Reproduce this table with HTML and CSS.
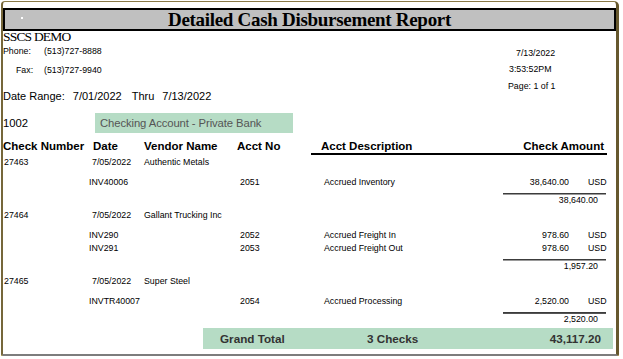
FILE: index.html
```html
<!DOCTYPE html>
<html>
<head>
<meta charset="utf-8">
<link rel="stylesheet" href="styles.css">
</head>
<body>
<div class="frame">
  <div class="titlebar"><span class="dot"></span><h1 class="title">Detailed Cash Disbursement Report</h1></div>
  <div class="head">
    <div class="left">
      <div class="name">SSCS DEMO</div>
      <div class="contact phone"><span class="lbl">Phone:</span><span>(513)727-8888</span></div>
      <div class="contact fax"><span class="lbl">Fax:</span><span>(513)727-9940</span></div>
      <div class="range"><span>Date Range:</span><span class="r1">7/01/2022</span><span class="r2">Thru</span><span class="r3">7/13/2022</span></div>
    </div>
    <div class="meta">
      <div class="m1">7/13/2022</div>
      <div class="m2">3:53:52PM</div>
      <div class="m3">Page: 1 of 1</div>
    </div>
  </div>
  <div class="account"><span class="acctno">1002</span><span class="acctname">Checking Account - Private Bank</span></div>

  <div class="grid hdr">
    <div>Check Number</div>
    <div class="p4">Date</div>
    <div>Vendor Name</div>
    <div class="p1">Acct No</div>
    <div class="uline p10">Acct Description</div>
    <div class="uline span2 right pr3">Check Amount</div>
  </div>

  <div class="group">
    <div class="grid check"><div class="p1">27463</div><div class="p3">7/05/2022</div><div class="span3">Authentic Metals</div></div>
    <div class="details">
      <div class="grid detail"><div></div><div class="span2">INV40006</div><div class="p4">2051</div><div class="p13">Accrued Inventory</div><div class="amt">38,640.00</div><div class="cur">USD</div></div>
    </div>
    <div class="subline"></div>
    <div class="subtotal">38,640.00</div>
  </div>

  <div class="group">
    <div class="grid check"><div class="p1">27464</div><div class="p3">7/05/2022</div><div class="span3">Gallant Trucking Inc</div></div>
    <div class="details">
      <div class="grid detail"><div></div><div class="span2">INV290</div><div class="p4">2052</div><div class="p13">Accrued Freight In</div><div class="amt">978.60</div><div class="cur">USD</div></div>
      <div class="grid detail"><div></div><div class="span2">INV291</div><div class="p4">2053</div><div class="p13">Accrued Freight Out</div><div class="amt">978.60</div><div class="cur">USD</div></div>
    </div>
    <div class="subline"></div>
    <div class="subtotal">1,957.20</div>
  </div>

  <div class="group">
    <div class="grid check"><div class="p1">27465</div><div class="p3">7/05/2022</div><div class="span3">Super Steel</div></div>
    <div class="details">
      <div class="grid detail"><div></div><div class="span2">INVTR40007</div><div class="p4">2054</div><div class="p13">Accrued Processing</div><div class="amt">2,520.00</div><div class="cur">USD</div></div>
    </div>
    <div class="subline dark"></div>
    <div class="subtotal">2,520.00</div>
  </div>

  <div class="grand"><div class="g1">Grand Total</div><div>3 Checks</div><div class="gamt">43,117.20</div></div>
</div>
</body>
</html>
```

FILE: styles.css
```css
html, body { margin: 0; padding: 0; background: #fff; }
body { font-family: "Liberation Sans", Arial, sans-serif; color: #000; }

.frame {
  margin: 1px 0 0 1px;
  width: 618px;
  height: 355px;
  box-sizing: border-box;
  border-left: 2px solid #76673a;
  border-top: 1px solid #8a7a48;
  border-right: 3px solid #66582e;
  border-bottom: 2px solid #7d7d7d;
  border-radius: 4px 5px 2px 2px;
  box-shadow: 0 1px 0 #f2d748;
  background: #fff;
}

.titlebar {
  position: relative;
  margin-top: 6px;
  height: 23px;
  box-sizing: border-box;
  border: 2px solid #000;
  background: #c0c0c0;
  display: flex;
  align-items: center;
  justify-content: center;
}
.dot { position: absolute; left: 16px; top: 7px; width: 2px; height: 2px; background: #fff; }
.title {
  margin: 0;
  font-family: "Liberation Serif", "Times New Roman", serif;
  font-weight: bold;
  font-size: 19px;
  letter-spacing: -0.3px;
  line-height: 19px;
}

.head { display: flex; }
.left { flex: 1; }
.name {
  font-family: "Liberation Serif", "Times New Roman", serif;
  font-size: 13.5px;
  letter-spacing: -0.8px;
  height: 12px;
  line-height: 12px;
}
.contact { display: flex; font-size: 8.8px; height: 13px; line-height: 13px; }
.contact .lbl { width: 41px; }
.phone { margin-top: 2px; }
.fax { margin-top: 6px; }
.fax .lbl { width: 28px; padding-left: 13px; }
.range { display: flex; margin-top: 12px; font-size: 11px; height: 14px; line-height: 14px; }
.r1 { margin-left: 8px; }
.r2 { margin-left: 10px; }
.r3 { margin-left: 8px; }

.meta { width: 108px; font-size: 8.8px; }
.meta div { height: 12px; line-height: 12px; }
.m1 { margin-top: 16px; padding-left: 8px; }
.m2 { margin-top: 4px; padding-left: 1px; }
.m3 { margin-top: 5px; }

.account { display: flex; align-items: center; margin-top: 10px; height: 20px; font-size: 11.3px; }
.acctno { width: 92px; }
.acctname {
  width: 198px;
  height: 20px;
  line-height: 20px;
  box-sizing: border-box;
  padding-left: 5px;
  background: #b6dcc5;
  color: #555;
  letter-spacing: -0.1px;
}

.grid {
  display: grid;
  grid-template-columns: 86px 55px 92px 75px 189px 72px 35px;
  white-space: nowrap;
}
.span2 { grid-column: span 2; }
.span3 { grid-column: span 3; }
.right { text-align: right; }
.p1 { padding-left: 1px; }
.p3 { padding-left: 3px; }
.p4 { padding-left: 4px; }
.p10 { padding-left: 10px; }
.p13 { padding-left: 13px; }
.pr3 { padding-right: 3px; }

.hdr { margin-top: 6px; font-weight: bold; font-size: 11.5px; line-height: 14px; }
.hdr > div { height: 14px; }
.hdr .uline { border-bottom: 2px solid #000; }

.check { font-size: 8.8px; height: 14px; line-height: 14px; }
.details { margin-top: 7px; }
.detail { font-size: 8.8px; height: 13px; line-height: 13px; }
.amt { text-align: right; padding-right: 3px; }
.cur { padding-left: 16px; }

.subline {
  margin-top: 4px;
  margin-left: 500px;
  width: 103px;
  height: 2px;
  box-sizing: border-box;
  border-top: 1px solid #3c3c3c;
  border-bottom: 1px solid #9a9a9a;
}
.subline.dark { border-bottom-color: #555; }
.subtotal { width: 595px; text-align: right; font-size: 8.8px; height: 10px; line-height: 10px; }
.group + .group { margin-top: 3px; }

.grand {
  margin-top: 4px;
  margin-left: 200px;
  width: 410px;
  height: 21px;
  line-height: 21px;
  background: #b6dcc5;
  display: grid;
  grid-template-columns: 164px 100px 1fr;
  font-weight: bold;
  font-size: 11.7px;
  color: #333;
}
.g1 { padding-left: 17px; }
.gamt { text-align: right; padding-right: 12px; }
```
